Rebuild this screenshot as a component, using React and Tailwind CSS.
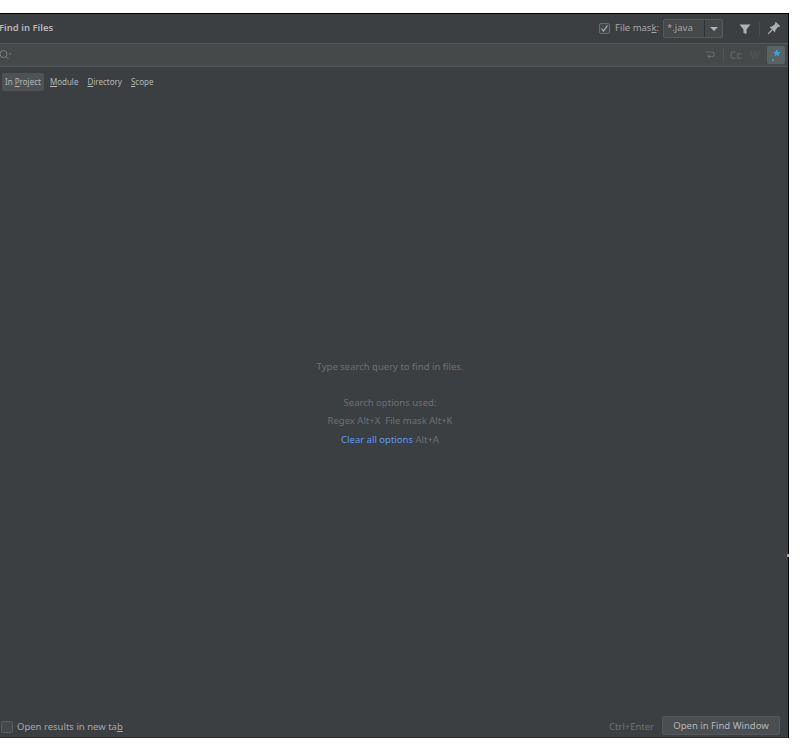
function Filter() {
  return (
    <svg width="12" height="12" viewBox="0 0 12 12">
      <path d="M0.5 1.500h11L7.500 6.500V11l-3-1V6.500z" fill="#afb1b3" />
    </svg>
  );
}

function Pin() {
  return (
    <svg width="14" height="14" viewBox="0 0 14 14">
      <g transform="rotate(45 7 7)" fill="#afb1b3">
        <rect x="4" y="0" width="6" height="1.500" />
        <path d="M5 1.500h4l.4 4.500 1.600 2H3l1.600-2z" />
        <rect x="6.400" y="8" width="1.200" height="6" />
      </g>
    </svg>
  );
}

function Tab({ active, before, ul, after }) {
  return (
    <div className={active ? "h-[18px] px-[3px] flex items-center rounded-[2px] bg-[#4e5254]" : "h-[18px] px-[3px] flex items-center"}>
      <span className="whitespace-pre">
        {before}
        <span className="underline">{ul}</span>
        {after}
      </span>
    </div>
  );
}

export default function App() {
  return (
    <div className="w-[800px] h-[746px] bg-white pt-[13px] pb-[8px] font-['Noto_Sans',sans-serif] overflow-hidden">
      <div className="relative w-[789px] h-full flex flex-col bg-[#3c3f41] border-t border-r border-b border-black border-b-[#2b2d2e]">
        <div className="h-[29px] flex items-center justify-between shrink-0">
          <div className="text-[9.5px] font-semibold text-[#b4b6b8] -ml-px">Find in Files</div>
          <div className="flex items-center text-[9.5px] text-[#a4a6a8]">
            <div className="w-[11px] h-[11px] rounded-[2px] border border-[#6b6b6b] bg-[#43494a] flex items-center justify-center">
              <svg width="9" height="9" viewBox="0 0 9 9">
                <path d="M1.500 4.500l2 2.500 4-5.500" fill="none" stroke="#a9b7c6" strokeWidth="1.200" />
              </svg>
            </div>
            <div className="ml-[5px] w-[43px] whitespace-nowrap">File mas<span className="underline">k</span>:</div>
            <div className="ml-[5px] w-[60px] h-[19px] flex items-center rounded-[2px] border border-[#565a5c] bg-[#45494a]">
              <div className="flex-1 pl-[3px] text-[#a4a6a8]">*.java</div>
              <div className="w-[18px] h-full border-l border-[#2f3133] flex items-center justify-center">
                <div className="w-0 h-0 border-x-[4px] border-x-transparent border-t-[4px] border-t-[#afb1b3]" />
              </div>
            </div>
            <div className="ml-[16px]"><Filter /></div>
            <div className="ml-[8px] w-px h-[14px] bg-[#4a4d4f]" />
            <div className="ml-[6px] mr-[8px]"><Pin /></div>
          </div>
        </div>

        <div className="h-[24px] shrink-0 flex items-center justify-between bg-[#45494a] border-y border-[#54585a]">
          <div className="flex items-center">
            <svg width="12" height="12" viewBox="0 0 12 12">
              <circle cx="3.500" cy="5" r="3.500" fill="none" stroke="#7c7f81" strokeWidth="1" />
              <path d="M6 7.500l2.500 2.500" stroke="#7c7f81" strokeWidth="1" />
              <path d="M8.500 4.500h3l-1.500 1.500z" fill="#7c7f81" />
            </svg>
          </div>
          <div className="flex items-center">
            <svg width="10" height="10" viewBox="0 0 10 10">
              <path d="M.500 2h6.500a2 2 0 0 1 0 4.500H3M4.500 5 3 6.500 4.500 8" fill="none" stroke="#686c6e" strokeWidth="1.200" />
            </svg>
            <div className="ml-[8px] w-px h-[14px] bg-[#505456]" />
            <div className="ml-[6px] text-[10px] font-bold text-[#5d6163]">Cc</div>
            <div className="ml-[9px] text-[10px] font-bold text-[#505456]">W</div>
            <div className="ml-[7px] mr-[3px] w-[18px] h-[18px] rounded-[2px] bg-[#596265] flex items-center justify-center text-[#3fa8e0] text-[13px] font-bold leading-none">
              <span className="text-[#4db2ea] text-[10px] mt-[3px] -mr-px">.</span>*
            </div>
          </div>
        </div>

        <div className="flex items-center gap-[3px] pl-[2px] pt-[6px] text-[8px] text-[#b4b6b8] shrink-0">
          <Tab active before="In " ul="P" after="roject" />
          <Tab ul="M" after="odule" />
          <Tab ul="D" after="irectory" />
          <Tab ul="S" after="cope" />
        </div>

        <div className="flex-1 flex flex-col items-center pt-[267px] pr-[8px] text-[9.5px] leading-[18.500px] text-[#6d7072]">
          <div>Type search query to find in files.</div>
          <div className="mt-[17px]">Search options used:</div>
          <div>Regex Alt+X&nbsp;&nbsp;File mask Alt+K</div>
          <div><span className="text-[#589df6]">Clear all options</span> Alt+A</div>
        </div>

        <div className="h-[24px] shrink-0 flex items-center justify-between text-[9.5px]">
          <div className="flex items-center text-[#a4a6a8]">
            <div className="ml-[1px] mt-[3px] w-[12px] h-[12px] rounded-[2px] border border-[#5a5d5f] bg-[#43494a]" />
            <div className="ml-[4px] mt-[4px]">Open results in new ta<span className="underline">b</span></div>
          </div>
          <div className="flex items-center">
            <div className="mt-[4px] text-[#6d7072]">Ctrl+Enter</div>
            <div className="ml-[8px] mr-[8px] w-[118px] h-[19px] pt-[3px] flex items-center justify-center rounded-[2px] border border-[#54585a] bg-[#4a4e50] text-[#b4b6b8]">Open in Find Window</div>
          </div>
        </div>

        <div className="absolute right-[-1px] top-[540px] w-[2px] h-[3px] bg-[#a9a9a0]" />
      </div>
    </div>
  );
}
